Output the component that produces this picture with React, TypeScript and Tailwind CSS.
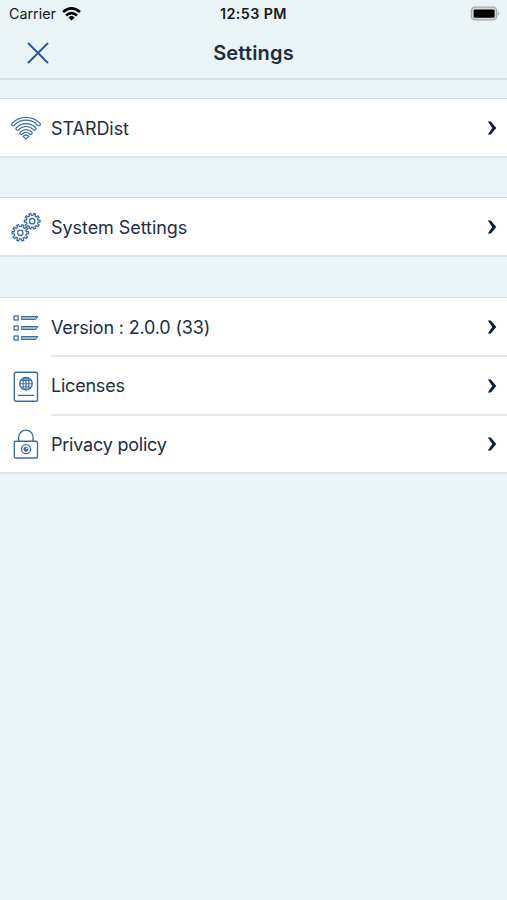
import type { ReactNode } from "react"
import clsx from "clsx"

const BLUE = "#3d6ca3"

// Outline of a toothed wheel centred on cx/cy
const gearPath = (cx: number, cy: number, outer: number, inner: number, teeth: number) => {
  const points: string[] = []
  const step = (Math.PI * 2) / teeth
  const add = (radius: number, angle: number) =>
    points.push(`${(cx + radius * Math.cos(angle)).toFixed(2)} ${(cy + radius * Math.sin(angle)).toFixed(2)}`)

  for (let i = 0; i < teeth; i++) {
    const a = i * step
    add(inner, a - step * 0.27)
    add(outer, a - step * 0.2)
    add(outer, a + step * 0.2)
    add(inner, a + step * 0.27)
  }
  return `M${points.join("L")}Z`
}

const wifiBands = ["M2.1 8.3C9.2 0.9 20.8 0.9 27.9 8.3", "M6.4 12.8C11.3 7.8 18.7 7.8 23.6 12.8", "M10.3 17C13 14.3 17 14.3 19.7 17"]

function WifiOutline() {
  return (
    <svg width="30" height="24" viewBox="0 0 30 24" fill="none" strokeLinecap="round">
      {wifiBands.map((d) => (
        <g key={d}>
          <path d={d} stroke={BLUE} strokeWidth="4.1" />
          <path d={d} stroke="#fff" strokeWidth="1.7" />
        </g>
      ))}
      <path d="M12.2 20.3Q15 17.9 17.8 20.3L15 23.1Z" stroke={BLUE} strokeWidth="1.2" strokeLinejoin="round" />
    </svg>
  )
}

function Gears() {
  return (
    <svg width="30" height="30" viewBox="0 0 30 30" fill="none" stroke={BLUE} strokeWidth="1.3" strokeLinejoin="round">
      <path d={gearPath(9.3, 20.8, 8.3, 6.2, 10)} />
      <circle cx="9.3" cy="20.8" r="2.7" />
      <path d={gearPath(21.2, 9.2, 7.9, 5.9, 10)} />
      <circle cx="21.2" cy="9.2" r="2.7" />
    </svg>
  )
}

function ListLines() {
  return (
    <svg width="26" height="26" viewBox="0 0 26 26" fill="none" stroke={BLUE}>
      {[3, 13, 23].map((y) => (
        <g key={y}>
          <rect x="1.1" y={y - 2} width="4" height="4" strokeWidth="1.3" />
          <path d={`M8.5 ${y - 1.5}H25L22.7 ${y + 1.5}H8.5Z`} fill="#9db4ce" strokeWidth="1" />
        </g>
      ))}
    </svg>
  )
}

function Passport() {
  return (
    <svg width="26" height="32" viewBox="0 0 26 32" fill="none" stroke={BLUE}>
      <rect x="1.3" y="1.3" width="23.2" height="29" rx="1.5" strokeWidth="1.4" />
      <circle cx="13" cy="12.7" r="6.2" strokeWidth="1.4" />
      <ellipse cx="13" cy="12.7" rx="3" ry="6.2" strokeWidth="1.1" />
      <path d="M13 6.5V18.9M6.8 12.7H19.2M8.2 9.4H17.8M8.2 16H17.8" strokeWidth="1.1" />
      <path d="M5.4 24.4H20.6" strokeWidth="1.3" strokeLinecap="round" />
    </svg>
  )
}

function Padlock() {
  return (
    <svg width="26" height="32" viewBox="0 0 26 32" fill="none" stroke={BLUE} strokeWidth="1.35">
      <rect x="1.3" y="13.2" width="23.2" height="16.8" rx="1.5" />
      <path d="M5.7 13V9.3A7.2 7.2 0 0 1 20.1 9.3V13" />
      <circle cx="13" cy="21.2" r="4.5" strokeWidth="1.3" />
      <circle cx="13" cy="21.2" r="2.1" strokeWidth="0.9" />
      <path d="M13 21.2V19A2.2 2.2 0 1 0 15.2 21.2Z" fill={BLUE} stroke="none" />
    </svg>
  )
}

interface RowProps {
  icon: ReactNode
  label: string
  height?: string
  divided?: boolean
  className?: string
}

function Row({ icon, label, height = "h-[57px]", divided = false, className = "pt-px tracking-[-0.06px]" }: RowProps) {
  return (
    <button className={clsx("flex w-full items-center text-left", height)}>
      <span className="flex w-[51px] shrink-0 items-center justify-center">{icon}</span>
      <span
        className={clsx(
          "flex h-full flex-1 items-center justify-between pr-2.5",
          divided && "border-b-2 border-[#e6e8ec]",
        )}
      >
        <span className={clsx("text-[18px]", className)}>{label}</span>
        <svg width="10" height="14" viewBox="0 0 10 14">
          <path d="M0.8 0.6H3.8L9.3 7L3.8 13.4H0.8L5.3 7Z" fill="#0e1d36" />
        </svg>
      </span>
    </button>
  )
}

function Section({ children }: { children: ReactNode }) {
  return <section className="border-t border-b-2 border-t-[#d0dce1] border-b-[#dbe4e8] bg-white">{children}</section>
}

function StatusBar() {
  return (
    <div className="grid h-7 grid-cols-3 items-center px-[7px] text-[#17191c]">
      <div className="flex items-center gap-[6px] pl-0.5 text-[14.3px]">
        Carrier
        <svg width="19" height="14" viewBox="0 0 19 14" fill="none" stroke="#000" strokeWidth="2.6">
          <path d="M1 5.1Q9.5 -2.2 18 5.1" />
          <path d="M4 8.4Q9.5 3.8 15 8.4" />
          <path d="M6.4 10.4Q9.5 7.7 12.6 10.4L9.5 13.5Z" fill="#000" stroke="none" />
        </svg>
      </div>
      <div className="text-center text-[14.3px] font-semibold tracking-[0.4px]">12:53 PM</div>
      <svg className="justify-self-end" width="30" height="16" viewBox="0 0 30 16">
        <rect x="1.4" y="1.2" width="25.2" height="12.6" rx="3.6" fill="#d5dadc" stroke="#a5abad" strokeWidth="1.3" />
        <rect x="3.6" y="3.4" width="21" height="8.3" rx="1.2" fill="#000" />
        <path d="M27.8 5.2Q30.4 7.6 27.8 10Z" fill="#a5abad" />
      </svg>
    </div>
  )
}

export default function App() {
  return (
    <div className="min-h-screen bg-[#eaf3f6] font-['Inter',sans-serif] text-[#202e44]">
      <header className="h-20 border-b-2 border-[#d9e1e5]">
        <StatusBar />
        <div className="grid h-[49px] grid-cols-3 items-center">
          <button aria-label="Close" className="ml-[27px] w-[22px]">
            <svg width="22" height="22" viewBox="0 0 22 22" fill="none" stroke="#285b91" strokeWidth="1.9" strokeLinecap="round">
              <path d="M1.5 1.5L20.5 20.5M20.5 1.5L1.5 20.5" />
            </svg>
          </button>
          <h1 className="text-center text-[20px] font-semibold tracking-[0.18px] text-[#1c2d44]">Settings</h1>
        </div>
      </header>

      <main className="flex flex-col gap-[39px] pt-[18px]">
        <Section>
          <Row icon={<WifiOutline />} label="STARDist" />
        </Section>
        <Section>
          <Row icon={<Gears />} label="System Settings" />
        </Section>
        <div className="pt-px">
          <Section>
            <Row
              icon={<ListLines />}
              label="Version : 2.0.0 (33)"
              height="h-[59px]"
              className="pt-px tracking-[-0.17px]"
              divided
            />
            <Row icon={<Passport />} label="Licenses" height="h-[59px]" className="tracking-[-0.22px]" divided />
            <Row icon={<Padlock />} label="Privacy policy" height="h-14" className="tracking-[-0.22px]" />
          </Section>
        </div>
      </main>
    </div>
  )
}
